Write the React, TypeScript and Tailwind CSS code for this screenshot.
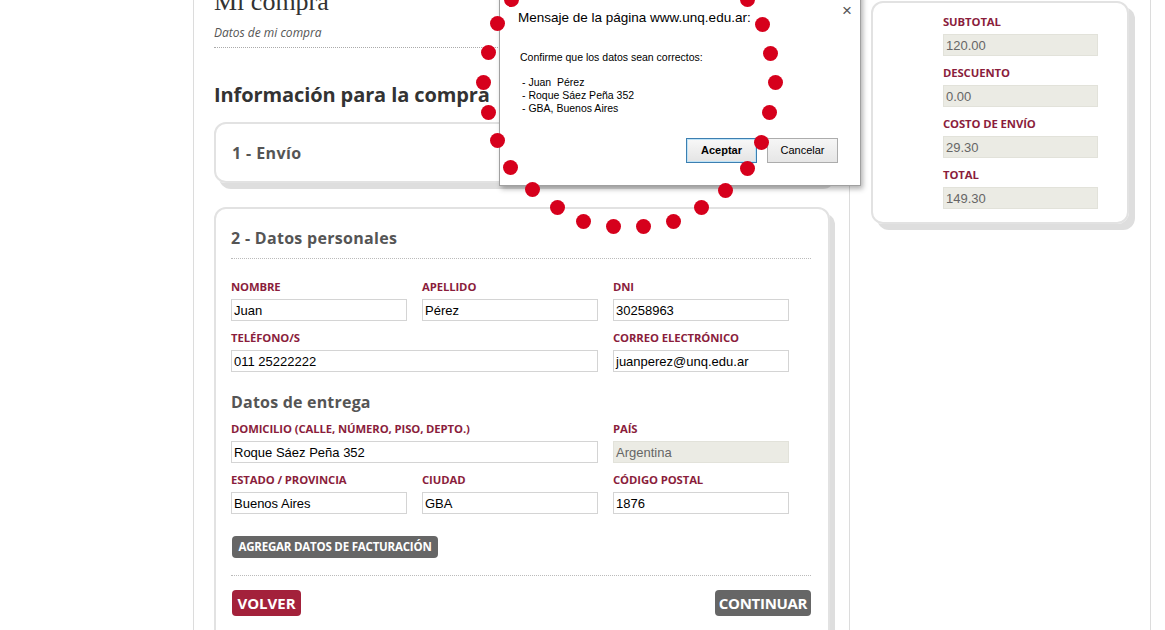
const sans = "font-['Open_Sans',sans-serif]";
const arial = "font-['Liberation_Sans',Arial,sans-serif]";

const dots: [number, number][] = [
  [511, -1], [497, 23], [488, 52], [483, 82], [488, 112], [497, 140], [510, 167],
  [532, 189], [557, 207], [583, 221], [613, 226], [643, 226], [673, 221], [701, 207],
  [725, 190], [747, 168], [761, 142], [769, 112], [775, 82], [770, 53], [762, 24], [747, -1],
];

const Label = ({ children }: { children: React.ReactNode }) => (
  <div className={`${sans} text-[11.3px] leading-[14px] font-bold text-[#8a1d3c] tracking-[-0.1px]`}>
    {children}
  </div>
);

const Field = ({ value, disabled }: { value: string; disabled?: boolean }) => (
  <div
    className={`${arial} mt-[5px] h-[22px] border px-[2px] text-[13px] leading-[21px] ${
      disabled
        ? "bg-[#ebebe4] border-[#e2e2da] text-[#666]"
        : "bg-white border-[#d4d4d4] text-black"
    }`}
  >
    {value}
  </div>
);

const SumField = ({ label, value, first }: { label: string; value: string; first?: boolean }) => (
  <div className={first ? "" : "mt-[10px]"}>
    <Label>{label}</Label>
    <Field value={value} disabled />
  </div>
);

export default function App() {
  return (
    <div className="relative h-[630px] w-[1165px] overflow-hidden bg-white">
      <div className="flex h-full pl-[193px]">
        {/* Main column */}
        <div className="w-[657px] border-x border-[#dcdcdc] pl-[20px]">
          <div className="w-[616px] border-b border-dotted border-[#aaa] pb-[6px]">
            <h1 className="mt-[-13px] h-[30px] font-['Liberation_Serif',serif] text-[26px] leading-[30px] text-[#333]">
              Mi compra
            </h1>
            <div className={`${sans} mt-[8px] text-[12px] leading-[16px] italic text-[#555]`}>
              Datos de mi compra
            </div>
          </div>

          <h2 className={`${sans} mt-[33px] text-[20px] leading-[28px] font-bold text-[#333] tracking-[-0.1px]`}>
            Información para la compra
          </h2>

          {/* Card 1 */}
          <div className="mt-[13px] h-[61px] w-[616px] rounded-[12px] border-2 border-[#e2e2e2] shadow-[5px_6px_0_#dedede] pl-[16px] flex items-center">
            <div className={`${sans} text-[16px] font-bold text-[#555] tracking-[0.4px]`}>1 - Envío</div>
          </div>

          {/* Card 2 */}
          <div className="mt-[24px] w-[616px] rounded-[12px] border-2 border-[#e2e2e2] shadow-[5px_6px_0_#dedede] pl-[15px] pr-[17px] pt-[18px] pb-[30px]">
            <div className="border-b border-dotted border-[#bbb] pb-[9px]">
              <div className={`${sans} text-[16px] leading-[22px] font-bold text-[#555] tracking-[0.3px]`}>
                2 - Datos personales
              </div>
            </div>

            <div className="mt-[21px] grid grid-cols-[176px_176px_176px] gap-x-[15px]">
              <div>
                <Label>NOMBRE</Label>
                <Field value="Juan" />
              </div>
              <div>
                <Label>APELLIDO</Label>
                <Field value="Pérez" />
              </div>
              <div>
                <Label>DNI</Label>
                <Field value="30258963" />
              </div>
              <div className="col-span-2 mt-[10px]">
                <Label>TELÉFONO/S</Label>
                <Field value="011 25222222" />
              </div>
              <div className="mt-[10px]">
                <Label>CORREO ELECTRÓNICO</Label>
                <Field value="juanperez@unq.edu.ar" />
              </div>
            </div>

            <div className={`${sans} mt-[20px] text-[16px] leading-[20px] font-bold text-[#555] tracking-[0.2px]`}>
              Datos de entrega
            </div>

            <div className="mt-[10px] grid grid-cols-[176px_176px_176px] gap-x-[15px]">
              <div className="col-span-2">
                <Label>DOMICILIO (CALLE, NÚMERO, PISO, DEPTO.)</Label>
                <Field value="Roque Sáez Peña 352" />
              </div>
              <div>
                <Label>PAÍS</Label>
                <Field value="Argentina" disabled />
              </div>
              <div className="mt-[10px]">
                <Label>ESTADO / PROVINCIA</Label>
                <Field value="Buenos Aires" />
              </div>
              <div className="mt-[10px]">
                <Label>CIUDAD</Label>
                <Field value="GBA" />
              </div>
              <div className="mt-[10px]">
                <Label>CÓDIGO POSTAL</Label>
                <Field value="1876" />
              </div>
            </div>

            <div className="mt-[22px] flex border-b border-dotted border-[#bbb] pb-[17px]">
              <button className={`${sans} ml-px h-[22px] w-[206px] rounded-[4px] bg-[#666] text-[11.5px] font-bold text-white tracking-[-0.2px]`}>
                AGREGAR DATOS DE FACTURACIÓN
              </button>
            </div>

            <div className="mt-[14px] flex justify-between">
              <button className={`${sans} ml-px h-[26px] w-[69px] rounded-[4px] bg-[#a3213b] text-[15px] font-bold text-white`}>
                VOLVER
              </button>
              <button className={`${sans} h-[26px] w-[96px] rounded-[4px] bg-[#666] text-[15px] font-bold text-white tracking-[-0.3px]`}>
                CONTINUAR
              </button>
            </div>
          </div>
        </div>

        {/* Sidebar */}
        <div className="w-[301px] border-r border-[#dcdcdc] pl-[21px]">
          <div className="mt-px w-[258px] rounded-[12px] border-2 border-[#e2e2e2] shadow-[6px_6px_0_#dedede] pl-[70px] pt-[12px] pb-[13px]">
            <div className="w-[155px]">
              <SumField label="SUBTOTAL" value="120.00" first />
              <SumField label="DESCUENTO" value="0.00" />
              <SumField label="COSTO DE ENVÍO" value="29.30" />
              <SumField label="TOTAL" value="149.30" />
            </div>
          </div>
        </div>
      </div>

      {/* Browser confirm dialog */}
      <div className={`${arial} absolute left-[499px] top-[-16px] h-[202px] w-[362px] border border-[#a0a0a0] bg-white shadow-[2px_3px_5px_rgba(0,0,0,0.3)]`}>
        <div className="flex items-start justify-between pl-[18px] pr-[8px] pt-[24px]">
          <div className="text-[13.5px] leading-[18px] text-black">Mensaje de la página www.unq.edu.ar:</div>
          <div className="mt-[-7px] text-[17px] leading-[18px] text-[#555]">×</div>
        </div>
        <div className="pl-[20px] pt-[24px] text-[10.5px] leading-[13px] text-black">
          <div>Confirme que los datos sean correctos:</div>
          <div className="mt-[12px] pl-[2px]">
            <div>- Juan&nbsp; Pérez</div>
            <div>- Roque Sáez Peña 352</div>
            <div>- GBA, Buenos Aires</div>
          </div>
        </div>
        <div className="mt-[23px] flex justify-end gap-[10px] pr-[22px]">
          <button className="h-[25px] w-[71px] border border-[#3c7fb1] bg-[linear-gradient(#f8f8f8,#e4e4e4)] text-[11px] font-bold text-black shadow-[inset_0_0_0_1px_#bfe3f7]">
            Aceptar
          </button>
          <button className="h-[25px] w-[71px] border border-[#acacac] bg-[linear-gradient(#f6f6f6,#e6e6e6)] text-[11px] text-black">
            Cancelar
          </button>
        </div>
      </div>

      {/* Red dotted annotation */}
      {dots.map(([x, y], i) => (
        <div
          key={i}
          className="absolute h-[15px] w-[15px] rounded-full bg-[#d6001c]"
          style={{ left: x - 7.5, top: y - 7.5 }}
        />
      ))}
    </div>
  );
}
